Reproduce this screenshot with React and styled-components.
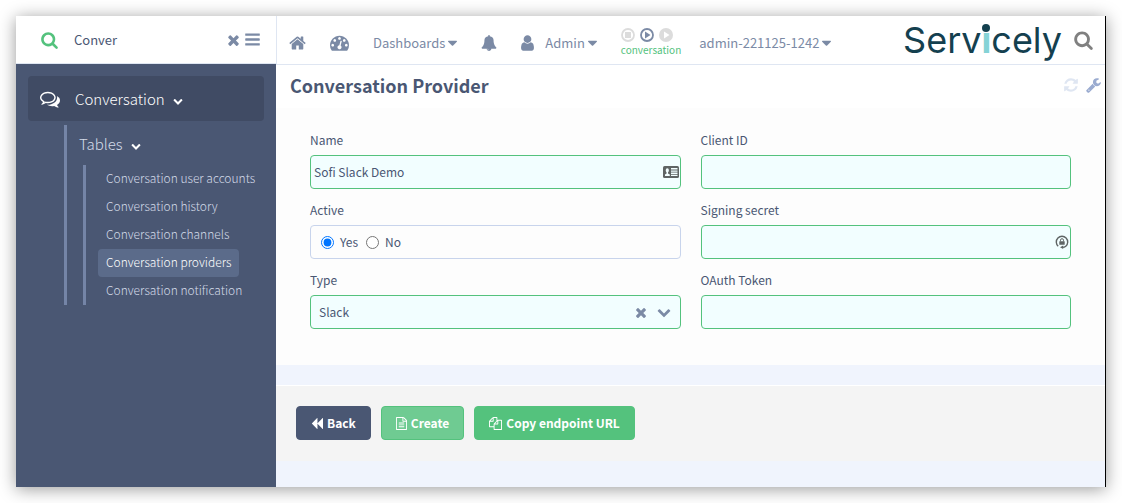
import React, { useState } from "react";
import styled, { createGlobalStyle } from "styled-components";

const sans = `"Noto Sans CJK SC", "Noto Sans", sans-serif`;

const c = {
  navy: "#4a5773",
  deep: "#404b64",
  slate: "#7b8aa5",
  line: "#dfe6f2",
  green: "#54c27d",
  mint: "#f2feff",
  pale: "#f0f4fd",
};

const glyphs = {
  home: [1664, "M1408 992v480q0 26-19 45t-45 19h-384v-384h-256v384h-384q-26 0-45-19t-19-45v-480q0-1 .5-3t.5-3l575-474 575 474q1 2 1 6zm223-69l-62 74q-8 9-21 11h-3q-13 0-21-7l-692-577-692 577q-12 8-24 7-13-2-21-11l-62-74q-8-10-7-23.5t11-21.5l719-599q32-26 76-26t76 26l244 204v-195q0-14 9-23t23-9h192q14 0 23 9t9 23v408l219 182q10 8 11 21.5t-7 23.5z"],
  search: [1664, "M1152 832q0-185-131.5-316.5t-316.5-131.5-316.5 131.5-131.5 316.5 131.5 316.5 316.5 131.5 316.5-131.5 131.5-316.5zm512 832q0 52-38 90t-90 38q-54 0-90-38l-343-342q-179 124-399 124-143 0-273.5-55.5t-225-150-150-225-55.5-273.5 55.5-273.5 150-225 225-150 273.5-55.5 273.5 55.5 225 150 150 225 55.5 273.5q0 220-124 399l343 343q37 37 37 90z"],
  times: [1408, "M1298 1322q0 40-28 68l-136 136q-28 28-68 28t-68-28l-294-294-294 294q-28 28-68 28t-68-28l-136-136q-28-28-28-68t28-68l294-294-294-294q-28-28-28-68t28-68l136-136q28-28 68-28t68 28l294 294 294-294q28-28 68-28t68 28l136 136q28 28 28 68t-28 68l-294 294 294 294q28 28 28 68z"],
  bars: [1536, "M1536 1344v128q0 26-19 45t-45 19h-1408q-26 0-45-19t-19-45v-128q0-26 19-45t45-19h1408q26 0 45 19t19 45zm0-512v128q0 26-19 45t-45 19h-1408q-26 0-45-19t-19-45v-128q0-26 19-45t45-19h1408q26 0 45 19t19 45zm0-512v128q0 26-19 45t-45 19h-1408q-26 0-45-19t-19-45v-128q0-26 19-45t45-19h1408q26 0 45 19t19 45z"],
  comments: [1792, "M704 384q-153 0-286 52t-211.5 141-78.5 191q0 82 53 158t149 132l97 56-35 84q34-20 62-39l44-31 53 10q78 14 153 14 153 0 286-52t211.5-141 78.5-191-78.5-191-211.5-141-286-52zm0-128q191 0 353.5 68.5t256.5 186.5 94 257-94 257-256.5 186.5-353.5 68.5q-86 0-176-16-124 88-278 128-36 9-86 16h-3q-11 0-20.5-8t-11.5-21q-1-3-1-6.5t.5-6.5 2-6l2.5-5 3.5-5.5 4-5 4.5-5 4-4.5q5-6 23-25t26-29.5 22.5-29 25-38.5 20.5-44q-124-72-195-177t-71-224q0-139 94-257t256.5-186.5 353.5-68.5zm822 1169q10 24 20.5 44t25 38.5 22.5 29 26 29.5 23 25q1 1 4 4.5t4.5 5 4 5 3.5 5.5l2.5 5 2 6 .5 6.5-1 6.5q-3 14-13 22t-22 7q-50-7-86-16-154-40-278-128-90 16-176 16-271 0-472-132 58 4 88 4 161 0 309-45t264-129q125-92 192-212t67-254q0-77-23-152 129 71 204 178t75 230q0 120-71 224.5t-195 176.5z"],
  gauge: [1792, "M384 1152q0-53-37.5-90.5t-90.5-37.5-90.5 37.5-37.5 90.5 37.5 90.5 90.5 37.5 90.5-37.5 37.5-90.5zm192-448q0-53-37.5-90.5t-90.5-37.5-90.5 37.5-37.5 90.5 37.5 90.5 90.5 37.5 90.5-37.5 37.5-90.5zm428 481l101-382q6-26-7.5-48.5t-38.5-29.5-48 6.5-30 39.5l-101 382q-60 5-107 43.5t-63 98.5q-20 77 20 146t117 89 146-20 89-117q16-60-6-117t-72-91zm660-33q0-53-37.5-90.5t-90.5-37.5-90.5 37.5-37.5 90.5 37.5 90.5 90.5 37.5 90.5-37.5 37.5-90.5zm-640-640q0-53-37.5-90.5t-90.5-37.5-90.5 37.5-37.5 90.5 37.5 90.5 90.5 37.5 90.5-37.5 37.5-90.5zm448 192q0-53-37.5-90.5t-90.5-37.5-90.5 37.5-37.5 90.5 37.5 90.5 90.5 37.5 90.5-37.5 37.5-90.5zm320 448q0 261-141 483-19 29-54 29h-1402q-35 0-54-29-141-221-141-483 0-182 71-348t191-286 286-191 348-71 348 71 286 191 191 286 71 348z"],
  bell: [1792, "M912 1696q0-16-16-16-59 0-101.5-42.5t-42.5-101.5q0-16-16-16t-16 16q0 73 51.5 124.5t124.5 51.5q16 0 16-16zm816-288q0 52-38 90t-90 38h-448q0 106-75 181t-181 75-181-75-75-181h-448q-52 0-90-38t-38-90q50-42 91-88t85-119.5 74.5-158.5 50-206 19.5-260q0-152 117-282.5t307-158.5q-8-19-8-39 0-40 28-68t68-28 68 28 28 68q0 20-8 39 190 28 307 158.5t117 282.5q0 139 19.5 260t50 206 74.5 158.5 85 119.5 91 88z"],
  user: [1280, "M1280 1399q0 109-62.5 187t-150.5 78h-854q-88 0-150.5-78t-62.5-187q0-85 8.5-160.5t31.5-152 58.5-131 94-89 134.5-34.5q131 128 313 128t313-128q76 0 134.5 34.5t94 89 58.5 131 31.5 152 8.5 160.5zm-256-887q0 159-112.5 271.5t-271.5 112.5-271.5-112.5-112.5-271.5 112.5-271.5 271.5-112.5 271.5 112.5 112.5 271.5z"],
  chevron: [1792, "M1683 808l-742 741q-19 19-45 19t-45-19l-742-741q-19-19-19-45.5t19-45.5l166-165q19-19 45-19t45 19l531 531 531-531q19-19 45-19t45 19l166 165q19 19 19 45.5t-19 45.5z"],
  caret: [1024, "M1024 704q0 26-19 45l-448 448q-19 19-45 19t-45-19l-448-448q-19-19-19-45t19-45 45-19h896q26 0 45 19t19 45z"],
  refresh: [1536, "M1511 1056q0 5-1 7-64 268-268 434.5t-478 166.5q-146 0-282.5-55t-243.5-157l-129 129q-19 19-45 19t-45-19-19-45v-448q0-26 19-45t45-19h448q26 0 45 19t19 45-19 45l-137 137q71 66 161 102t187 36q134 0 250-65t186-179q11-17 53-117 8-23 30-23h192q13 0 22.5 9.5t9.5 22.5zm25-800v448q0 26-19 45t-45 19h-448q-26 0-45-19t-19-45 19-45l138-138q-148-137-349-137-134 0-250 65t-186 179q-11 17-53 117-8 23-30 23h-199q-13 0-22.5-9.5t-9.5-22.5v-7q65-268 270-434.5t480-166.5q146 0 284 55.5t245 156.5l130-129q19-19 45-19t45 19 19 45z"],
  wrench: [1664, "M384 1472q0-26-19-45t-45-19-45 19-19 45 19 45 45 19 45-19 19-45zm644-420l-682 682q-37 37-90 37-52 0-91-37l-106-108q-38-36-38-90 0-53 38-91l681-681q39 98 114.5 173.5t173.5 114.5zm634-435q0 39-23 106-47 134-164.5 217.5t-258.5 83.5q-185 0-316.5-131.5t-131.5-316.5 131.5-316.5 316.5-131.5q58 0 121.5 16.5t107.5 46.5q16 11 16 28t-16 28l-293 169v224l193 107q5-3 79-48.5t135.5-81 70.5-35.5q15 0 23.5 10t8.5 25z"],
  backward: [1664, "M1619 141q19-19 32-13t13 32v1472q0 26-13 32t-32-13l-710-710q-9-9-13-19v710q0 26-13 32t-32-13l-710-710q-19-19-19-45t19-45l710-710q19-19 32-13t13 32v710q4-10 13-19z"],
  file: [1536, "M1468 380q28 28 48 76t20 88v1152q0 40-28 68t-68 28h-1344q-40 0-68-28t-28-68v-1600q0-40 28-68t68-28h896q40 0 88 20t76 48zm-444-244v376h376q-10-29-22-41l-313-313q-12-12-41-22zm384 1528v-1024h-416q-40 0-68-28t-28-68v-416h-768v1536h1280zm-1024-864q0-14 9-23t23-9h704q14 0 23 9t9 23v64q0 14-9 23t-23 9h-704q-14 0-23-9t-9-23v-64zm736 224q14 0 23 9t9 23v64q0 14-9 23t-23 9h-704q-14 0-23-9t-9-23v-64q0-14 9-23t23-9h704zm0 256q14 0 23 9t9 23v64q0 14-9 23t-23 9h-704q-14 0-23-9t-9-23v-64q0-14 9-23t23-9h704z"],
  files: [1792, "M1696 384q40 0 68 28t28 68v1216q0 40-28 68t-68 28h-960q-40 0-68-28t-28-68v-288h-544q-40 0-68-28t-28-68v-672q0-40 20-88t48-76l408-408q28-28 76-48t88-20h416q40 0 68 28t28 68v328q68-40 128-40h416zm-544 213l-299 299h299v-299zm-640-384l-299 299h299v-299zm196 647l316-316v-416h-384v416q0 40-28 68t-68 28h-416v640h512v-256q0-40 20-88t48-76zm956 804v-1152h-384v416q0 40-28 68t-68 28h-416v640h896z"],
};

const Svg = styled.svg`
  display: block;
  flex: none;
  fill: currentColor;
`;

function Icon({ name, size }) {
  const [w, d] = glyphs[name];
  return (
    <Svg width={Math.round((w / 1792) * size)} height={size} viewBox={`0 0 ${w} 1792`} aria-hidden="true">
      <path d={d} />
    </Svg>
  );
}

const Global = createGlobalStyle`
  *, *::before, *::after { box-sizing: border-box; }
  body { margin: 0; background: #fff; font: 13px/20px ${sans}; color: ${c.navy}; }
  button, input, select { font: inherit; color: inherit; }
  a { color: inherit; text-decoration: none; }
`;

const Page = styled.div`
  min-height: 100vh;
  display: flex;
  padding: 16px;
`;

const Frame = styled.div`
  flex: 1;
  min-width: 0;
  display: grid;
  grid-template-columns: 260px minmax(0, 1fr);
  border-right: 1px solid #000;
  box-shadow: 0 2px 16px rgba(0, 0, 0, 0.4);
`;

const IconButton = styled.button`
  display: flex;
  padding: 0;
  border: 0;
  background: none;
  color: ${(p) => p.$color || c.slate};
  cursor: pointer;
`;

const Sidebar = styled.aside`
  display: flex;
  flex-direction: column;
  background: ${c.navy};
`;

const SideSearch = styled.div`
  display: flex;
  align-items: center;
  height: 48px;
  padding: 0 16px 0 25px;
  gap: 5px;
  background: #fff;
  border-bottom: 1px solid ${c.line};
  color: ${c.green};
`;

const SideInput = styled.input`
  flex: 1;
  min-width: 0;
  margin-left: 11px;
  padding: 0;
  border: 0;
  outline: 0;
  background: none;
  color: ${c.navy};
`;

const Nav = styled.nav`
  padding: 12px;
  color: #fff;
`;

const Module = styled.button`
  display: flex;
  align-items: center;
  gap: 8px;
  width: 100%;
  height: 45px;
  padding: 0 12px;
  border: 0;
  border-radius: 4px;
  background: ${c.deep};
  font-size: 15px;
  font-weight: 300;
  color: #fff;

  span { margin-left: 7px; }
`;

const Expander = styled.i`
  padding-top: 4px;
`;

const Branch = styled.div`
  margin: 4px 0 0 36px;
  border-left: 3px solid #7585a7;
`;

const BranchTitle = styled.button`
  display: flex;
  align-items: center;
  gap: 8px;
  height: 40px;
  padding: 0 12px 3px;
  border: 0;
  background: none;
  font-size: 15px;
  font-weight: 300;
  color: #fff;

  span { color: #d3dae8; }
`;

const Leaves = styled.ul`
  list-style: none;
  margin: 0 0 0 16px;
  padding: 0 0 0 12px;
  border-left: 3px solid #7585a7;
`;

const Leaf = styled.li`
  display: flex;
`;

const LeafLink = styled.a`
  height: 28px;
  padding: 0 8px;
  border-radius: 4px;
  font-size: 12px;
  font-weight: 300;
  line-height: 26px;
  white-space: nowrap;
  background: ${(p) => (p.$on ? "#5b6b8a" : "none")};
  && { color: ${(p) => (p.$on ? "#fff" : "#d3dae8")}; }
`;

const Main = styled.main`
  display: flex;
  flex-direction: column;
  background: ${c.pale};
`;

const TopBar = styled.header`
  display: flex;
  justify-content: space-between;
  height: 49px;
  padding: 0 12px;
  background: #fff;
  border-left: 1px solid ${c.line};
  border-bottom: 1px solid ${c.line};
`;

const TopGroup = styled.div`
  display: flex;
  align-items: center;
  gap: ${(p) => p.$gap || 0}px;
  color: ${c.slate};
`;

const TopNav = styled(TopGroup)`
  padding-top: 5px;
`;

const MenuButton = styled(IconButton)`
  align-items: center;
  gap: 3px;
  line-height: 20px;
`;

const UserLabel = styled.span`
  margin-left: 8px;
`;

const Recorder = styled.div`
  display: flex;
  flex-direction: column;
  color: ${c.green};
  font-size: 10px;
  line-height: 16px;
`;

const RecorderRow = styled.div`
  display: flex;
  gap: 5px;
`;

const Brand = styled.a`
  font: 400 36px/48px Inter, sans-serif;
  && { color: #14404f; }
`;

const BrandI = styled.span`
  position: relative;
  font-weight: 700;
  color: #85d3d6;

  &::after {
    content: "";
    position: absolute;
    left: 50%;
    top: 6px;
    width: 8px;
    height: 8px;
    margin-left: -4px;
    border-radius: 50%;
    background: #14404f;
  }
`;

const TitleBar = styled.div`
  display: flex;
  justify-content: space-between;
  align-items: center;
  height: 43px;
  padding: 0 4px 3px 14px;
  background: #fff;
`;

const Title = styled.h1`
  margin: 0;
  font-size: 18px;
  line-height: 24px;
  font-weight: 700;
`;

const Form = styled.form`
  display: grid;
  grid-template-columns: 1fr 1fr;
  gap: 12px 20px;
  padding: 23px 34px 36px;
  background: #fdfdfd;
`;

const Field = styled.div`
  display: flex;
  flex-direction: column;
  gap: 6px;
  font-size: 12px;
  line-height: 18px;
`;

const Box = styled.div`
  display: flex;
  align-items: center;
  height: 34px;
  border: 1px solid ${(p) => (p.$plain ? "#c8d4ec" : c.green)};
  border-radius: 4px;
  background: ${(p) => (p.$plain ? "#fdfdfd" : c.mint)};
  padding: 0 ${(p) => p.$right || 1}px 0 ${(p) => p.$left || 3}px;
  gap: ${(p) => p.$gap || 8}px;
`;

const TextInput = styled.input`
  flex: 1;
  min-width: 0;
  padding: 0;
  border: 0;
  outline: 0;
  background: none;
`;

const Picker = styled.select`
  flex: 1;
  min-width: 0;
  padding: 0;
  border: 0;
  outline: 0;
  background: none;
  appearance: none;
`;

const Choice = styled.label`
  display: flex;
  align-items: center;
  gap: 6px;

  input { margin: 0; width: 13px; height: 13px; }
`;

const Actions = styled.div`
  display: flex;
  gap: 10px;
  margin-top: 20px;
  padding: 20px 20px 21px;
  border-top: 1px solid #fff;
  background: #f4f4f4;
`;

const Action = styled.button`
  display: flex;
  align-items: center;
  gap: 4px;
  height: 34px;
  padding: 0 14px;
  border: 1px solid ${(p) => p.$edge || p.$fill};
  border-radius: 4px;
  background: ${(p) => p.$fill};
  color: #fff;
  font-size: 12px;
  font-weight: 700;
`;

function Ring({ color, children, filled }) {
  return (
    <Svg width="14" height="14" viewBox="0 0 14 14" aria-hidden="true">
      <circle cx="7" cy="7" r={filled ? 7 : 6} fill={filled ? color : "none"} stroke={filled ? "none" : color} strokeWidth="1.8" />
      {children}
    </Svg>
  );
}

function CardIcon() {
  return (
    <Svg width="16" height="12" viewBox="0 0 16 12" aria-hidden="true">
      <rect width="16" height="12" rx="1.6" fill="#5f6464" />
      <path d="M2 10V8.4l1.6-.9V6.4Q2.7 5.6 2.7 4.3 2.7 2.2 4.3 2.2 5.9 2.2 5.9 4.3 5.9 5.6 5 6.4v1.1l1.8.9V10zM8 2h6.5v1.4H8zM8 4.4h6.5v1.4H8zM8 6.6h6.5V8H8zM8 8.8h6.5V10H8z" fill="#f2feff" />
    </Svg>
  );
}

function LockIcon() {
  return (
    <Svg width="14" height="14" viewBox="0 0 14 14" aria-hidden="true">
      <path d="M3.2 11.2A5.7 5.7 0 1 1 10.8 11.2Q9.400 12.400 7.500 12.400" fill="none" stroke="#5f6464" strokeWidth="1.4" />
      <path d="M5 12.300 8.200 10.400V14z" fill="#5f6464" />
      <rect x="4.3" y="6.2" width="5.4" height="3.600" rx=".4" fill="#5f6464" />
      <path d="M5.500 6.400V5.200a1.500 1.500 0 0 1 3 0v1.200" fill="none" stroke="#5f6464" />
    </Svg>
  );
}

const leaves = ["user accounts", "history", "channels", "providers", "notification"];

export default function App() {
  const [filter, setFilter] = useState("Conver");
  const [type, setType] = useState("Slack");
  return (
    <Page>
      <Global />
      <Frame>
        <Sidebar>
          <SideSearch>
            <Icon name="search" size={18} />
            <SideInput aria-label="Filter navigation" value={filter} onChange={(e) => setFilter(e.target.value)} />
            <IconButton aria-label="Clear filter" onClick={() => setFilter("")}><Icon name="times" size={16} /></IconButton>
            <IconButton aria-label="Menu"><Icon name="bars" size={17} /></IconButton>
          </SideSearch>
          <Nav>
            <Module>
              <Icon name="comments" size={20} />
              <span>Conversation</span>
              <Expander><Icon name="chevron" size={10} /></Expander>
            </Module>
            <Branch>
              <BranchTitle>
                <span>Tables</span>
                <Expander><Icon name="chevron" size={10} /></Expander>
              </BranchTitle>
              <Leaves>
                {leaves.map((name) => (
                  <Leaf key={name}>
                    <LeafLink href="#" $on={name === "providers"}>Conversation {name}</LeafLink>
                  </Leaf>
                ))}
              </Leaves>
            </Branch>
          </Nav>
        </Sidebar>
        <Main>
          <TopBar>
            <TopNav $gap={24}>
              <IconButton aria-label="Home"><Icon name="home" size={18} /></IconButton>
              <IconButton aria-label="Overview"><Icon name="gauge" size={19} /></IconButton>
              <MenuButton>Dashboards <Icon name="caret" size={16} /></MenuButton>
              <IconButton aria-label="Notifications"><Icon name="bell" size={16} /></IconButton>
              <MenuButton>
                <Icon name="user" size={18} />
                <UserLabel>Admin</UserLabel>
                <Icon name="caret" size={16} />
              </MenuButton>
              <TopGroup $gap={18}>
                <Recorder>
                  <RecorderRow>
                    <Ring color="#dcdcdc"><rect x="4" y="4" width="6" height="6" fill="#dcdcdc" /></Ring>
                    <Ring color={c.slate}><path d="M5 3.5v7l5.5-3.5z" fill={c.slate} /></Ring>
                    <Ring color="#dcdcdc" filled><path d="M5 3.5v7l5.5-3.5z" fill="#fff" /></Ring>
                  </RecorderRow>
                  conversation
                </Recorder>
                <MenuButton>admin-221125-1242 <Icon name="caret" size={16} /></MenuButton>
              </TopGroup>
            </TopNav>
            <TopGroup $gap={12}>
              <Brand href="#">Serv<BrandI>i</BrandI>cely</Brand>
              <IconButton aria-label="Search" $color="#808080"><Icon name="search" size={20} /></IconButton>
            </TopGroup>
          </TopBar>
          <TitleBar>
            <Title>Conversation Provider</Title>
            <TopGroup $gap={8}>
              <IconButton aria-label="Refresh" $color="#dfe6f2"><Icon name="refresh" size={16} /></IconButton>
              <IconButton aria-label="Configure" $color="#9aabd0"><Icon name="wrench" size={16} /></IconButton>
            </TopGroup>
          </TitleBar>
          <Form>
            <Field>
              <label htmlFor="name">Name</label>
              <Box><TextInput id="name" defaultValue="Sofi Slack Demo" /><CardIcon /></Box>
            </Field>
            <Field>
              <label htmlFor="client">Client ID</label>
              <Box><TextInput id="client" /></Box>
            </Field>
            <Field role="radiogroup" aria-labelledby="active">
              <span id="active">Active</span>
              <Box $plain $left={10}>
                <Choice><input type="radio" name="active" defaultChecked />Yes</Choice>
                <Choice><input type="radio" name="active" />No</Choice>
              </Box>
            </Field>
            <Field>
              <label htmlFor="secret">Signing secret</label>
              <Box><TextInput id="secret" /><LockIcon /></Box>
            </Field>
            <Field>
              <label htmlFor="type">Type</label>
              <Box $left={8} $right={9} $gap={10}>
                <Picker id="type" value={type} onChange={(e) => setType(e.target.value)}>
                  <option>Slack</option>
                  <option value="" />
                </Picker>
                <IconButton type="button" aria-label="Clear type" onClick={() => setType("")}><Icon name="times" size={15} /></IconButton>
                <TopGroup><Icon name="chevron" size={14} /></TopGroup>
              </Box>
            </Field>
            <Field>
              <label htmlFor="token">OAuth Token</label>
              <Box><TextInput id="token" /></Box>
            </Field>
          </Form>
          <Actions>
            <Action $fill={c.navy}><Icon name="backward" size={13} />Back</Action>
            <Action $fill="#6fcb92" $edge={c.green}><Icon name="file" size={13} />Create</Action>
            <Action $fill={c.green}><Icon name="files" size={13} />Copy endpoint URL</Action>
          </Actions>
        </Main>
      </Frame>
    </Page>
  );
}
